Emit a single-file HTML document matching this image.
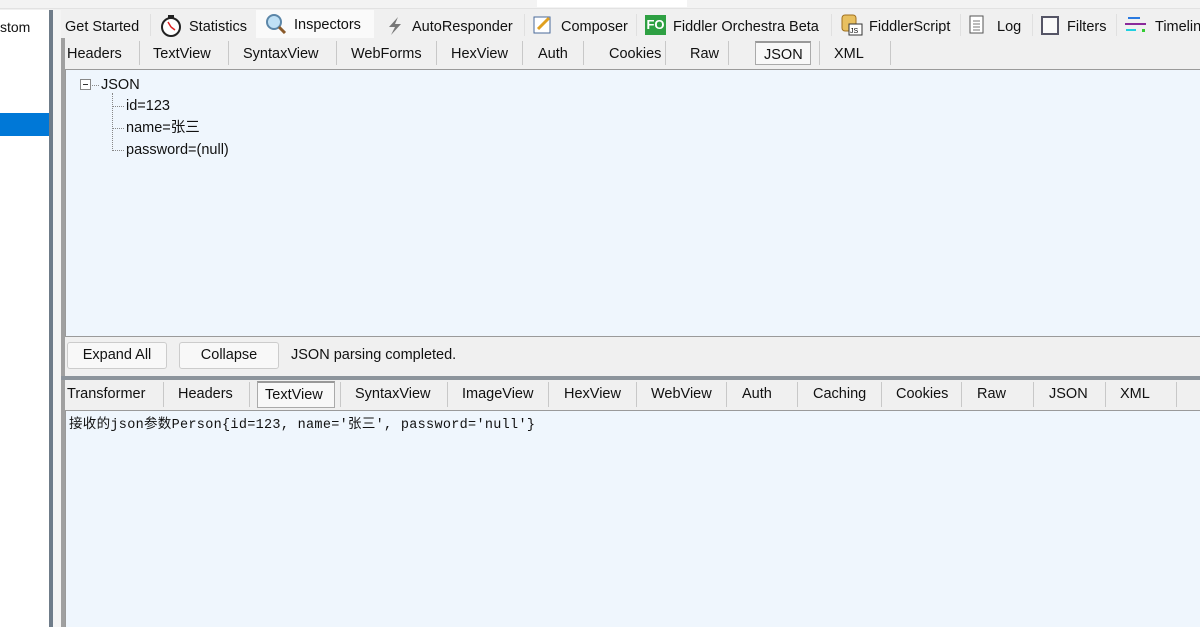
<!DOCTYPE html>
<html><head><meta charset="utf-8"><style>
*{margin:0;padding:0;box-sizing:border-box}
body{width:1200px;height:627px;overflow:hidden;background:#f0f0f0;position:relative;font-family:"Liberation Sans","Noto Sans CJK SC",sans-serif;font-size:14.5px;color:#111}
.a{position:absolute;white-space:nowrap;line-height:18px}
.sep{position:absolute;width:1px;background:#c8c8c8}
</style></head><body>
<div class="a" style="left:0;top:0;width:1200px;height:9px;background:#f3f3f3;border-bottom:1px solid #e2e2e2"></div>
<div class="a" style="left:537px;top:0;width:150px;height:7px;background:#fff"></div>
<!-- left panel -->
<div class="a" style="left:0;top:10px;width:49px;height:617px;background:#fff"></div>
<div class="a" style="left:0;top:18px;font-size:14px">stom</div>
<div class="a" style="left:0;top:113px;width:49px;height:23px;background:#0078d7"></div>
<div class="a" style="left:49px;top:10px;width:4px;height:617px;background:#6f7c89"></div>
<div class="a" style="left:53px;top:10px;width:8px;height:617px;background:#f4f4f4"></div>
<div class="a" style="left:61px;top:10px;width:4px;height:617px;background:#a0a0a0"></div>
<!-- top tabs -->
<div class="a" style="left:61px;top:10px;width:1139px;height:28px;background:#f0f0f0"></div>
<div class="a" style="left:256px;top:10px;width:118px;height:30px;background:#fafafa"></div>
<div class="a" style="left:65px;top:18px">Get Started</div>
<div class="sep" style="left:150px;top:14px;height:22px;background:#e0e0e0"></div>
<svg class="a" style="left:160px;top:14px" width="22" height="24"><circle cx="11" cy="13" r="9" fill="#fff" stroke="#222" stroke-width="2"/><path d="M11 13L8 8M11 13l4 3" stroke="#d22" stroke-width="1.5"/><rect x="8" y="1" width="6" height="3" fill="#222"/></svg>
<div class="a" style="left:189px;top:18px">Statistics</div>
<svg class="a" style="left:264px;top:12px" width="24" height="22"><circle cx="10" cy="10" r="7" fill="#bfe0f5" stroke="#5b86a8" stroke-width="2"/><path d="M15 15l6 6" stroke="#8a5a2a" stroke-width="3"/></svg>
<div class="a" style="left:294px;top:16px">Inspectors</div>
<svg class="a" style="left:386px;top:16px" width="18" height="20"><path d="M12 1L3 11h6l-4 8 10-11H9z" fill="#777"/></svg>
<div class="a" style="left:412px;top:18px">AutoResponder</div>
<div class="sep" style="left:524px;top:14px;height:22px;background:#e0e0e0"></div>
<svg class="a" style="left:533px;top:15px" width="20" height="20"><rect x="1" y="2" width="16" height="16" fill="#fff" stroke="#4a6a9a"/><path d="M5 14L16 3" stroke="#e0a020" stroke-width="3"/></svg>
<div class="a" style="left:561px;top:18px">Composer</div>
<div class="sep" style="left:636px;top:14px;height:22px;background:#e0e0e0"></div>
<div class="a" style="left:645px;top:15px;width:21px;height:20px;background:#2ea043;color:#fff;font-size:13px;font-weight:bold;text-align:center;line-height:20px">FO</div>
<div class="a" style="left:673px;top:18px">Fiddler Orchestra Beta</div>
<div class="sep" style="left:831px;top:14px;height:22px;background:#e0e0e0"></div>
<svg class="a" style="left:840px;top:13px" width="24" height="24"><rect x="2" y="2" width="14" height="16" rx="3" fill="#e8c060" stroke="#a07020"/><rect x="9" y="11" width="13" height="11" fill="#fff" stroke="#333"/><text x="10" y="20" font-size="7" font-family="Liberation Sans">JS</text></svg>
<div class="a" style="left:869px;top:18px">FiddlerScript</div>
<div class="sep" style="left:960px;top:14px;height:22px;background:#e0e0e0"></div>
<svg class="a" style="left:969px;top:15px" width="16" height="20"><rect x="1" y="1" width="13" height="17" fill="#fff" stroke="#555"/><path d="M4 6h7M4 9h7M4 12h7M4 15h7" stroke="#777"/></svg>
<div class="a" style="left:997px;top:18px">Log</div>
<div class="sep" style="left:1032px;top:14px;height:22px;background:#e0e0e0"></div>
<div class="a" style="left:1041px;top:16px;width:18px;height:19px;border:2px solid #556;background:#fafafa"></div>
<div class="a" style="left:1067px;top:18px">Filters</div>
<div class="sep" style="left:1116px;top:14px;height:22px;background:#e0e0e0"></div>
<svg class="a" style="left:1124px;top:16px" width="24" height="18"><path d="M4 2h12" stroke="#2a7ae0" stroke-width="2"/><path d="M1 8h21" stroke="#8a2a9a" stroke-width="2"/><path d="M2 14h10" stroke="#20d0e0" stroke-width="2"/><rect x="18" y="13" width="3" height="3" fill="#3c3"/></svg>
<div class="a" style="left:1155px;top:18px">Timeline</div>
<!-- sub tabs -->
<div class="a" style="left:65px;top:38px;width:1135px;height:30px;background:#f0f0f0"></div>
<div class="a" style="left:67px;top:45px">Headers</div>
<div class="sep" style="left:139px;top:41px;height:24px"></div>
<div class="a" style="left:153px;top:45px">TextView</div>
<div class="sep" style="left:228px;top:41px;height:24px"></div>
<div class="a" style="left:243px;top:45px">SyntaxView</div>
<div class="sep" style="left:336px;top:41px;height:24px"></div>
<div class="a" style="left:351px;top:45px">WebForms</div>
<div class="sep" style="left:436px;top:41px;height:24px"></div>
<div class="a" style="left:451px;top:45px">HexView</div>
<div class="sep" style="left:522px;top:41px;height:24px"></div>
<div class="a" style="left:538px;top:45px">Auth</div>
<div class="sep" style="left:583px;top:41px;height:24px"></div>
<div class="a" style="left:609px;top:45px">Cookies</div>
<div class="sep" style="left:665px;top:41px;height:24px"></div>
<div class="a" style="left:690px;top:45px">Raw</div>
<div class="sep" style="left:728px;top:41px;height:24px"></div>
<div class="a" style="left:755px;top:41px;width:56px;height:24px;border:1px solid #aaa;border-top:2px solid #999;background:#f8f8f8"></div>
<div class="a" style="left:764px;top:46px">JSON</div>
<div class="sep" style="left:819px;top:41px;height:24px"></div>
<div class="a" style="left:834px;top:45px">XML</div>
<div class="sep" style="left:890px;top:41px;height:24px"></div>
<!-- JSON pane -->
<div class="a" style="left:65px;top:69px;width:1135px;height:268px;background:#eff6fd;border:1px solid #9a9a9a;border-right:none"></div>
<div class="a" style="left:80px;top:79px;width:11px;height:11px;border:1px solid #888;background:#fff"></div>
<div class="a" style="left:83px;top:84px;width:5px;height:1px;background:#333"></div>
<div class="a" style="left:92px;top:85px;width:7px;border-top:1px dotted #888"></div>
<div class="a" style="left:101px;top:76px">JSON</div>
<div class="a" style="left:112px;top:93px;height:58px;border-left:1px dotted #888"></div>
<div class="a" style="left:113px;top:106px;width:11px;border-top:1px dotted #888"></div>
<div class="a" style="left:113px;top:128px;width:11px;border-top:1px dotted #888"></div>
<div class="a" style="left:113px;top:150px;width:11px;border-top:1px dotted #888"></div>
<div class="a" style="left:126px;top:97px">id=123</div>
<div class="a" style="left:126px;top:119px">name=张三</div>
<div class="a" style="left:126px;top:141px">password=(null)</div>
<!-- buttons -->
<div class="a" style="left:67px;top:342px;width:100px;height:27px;border:1px solid #ccc;border-radius:3px;background:#f8f8f8;text-align:center;line-height:25px">Expand All</div>
<div class="a" style="left:179px;top:342px;width:100px;height:27px;border:1px solid #ccc;border-radius:3px;background:#f8f8f8;text-align:center;line-height:25px">Collapse</div>
<div class="a" style="left:291px;top:346px">JSON parsing completed.</div>
<!-- splitter -->
<div class="a" style="left:61px;top:376px;width:1139px;height:4px;background:#8c949c"></div>
<!-- lower tabs -->
<div class="a" style="left:67px;top:385px">Transformer</div>
<div class="sep" style="left:163px;top:382px;height:25px"></div>
<div class="a" style="left:178px;top:385px">Headers</div>
<div class="sep" style="left:249px;top:382px;height:25px"></div>
<div class="a" style="left:257px;top:381px;width:78px;height:27px;border:1px solid #aaa;border-top:2px solid #999;background:#f8f8f8"></div>
<div class="a" style="left:265px;top:386px">TextView</div>
<div class="sep" style="left:340px;top:382px;height:25px"></div>
<div class="a" style="left:355px;top:385px">SyntaxView</div>
<div class="sep" style="left:447px;top:382px;height:25px"></div>
<div class="a" style="left:462px;top:385px">ImageView</div>
<div class="sep" style="left:548px;top:382px;height:25px"></div>
<div class="a" style="left:564px;top:385px">HexView</div>
<div class="sep" style="left:636px;top:382px;height:25px"></div>
<div class="a" style="left:651px;top:385px">WebView</div>
<div class="sep" style="left:726px;top:382px;height:25px"></div>
<div class="a" style="left:742px;top:385px">Auth</div>
<div class="sep" style="left:797px;top:382px;height:25px"></div>
<div class="a" style="left:813px;top:385px">Caching</div>
<div class="sep" style="left:881px;top:382px;height:25px"></div>
<div class="a" style="left:896px;top:385px">Cookies</div>
<div class="sep" style="left:961px;top:382px;height:25px"></div>
<div class="a" style="left:977px;top:385px">Raw</div>
<div class="sep" style="left:1033px;top:382px;height:25px"></div>
<div class="a" style="left:1049px;top:385px">JSON</div>
<div class="sep" style="left:1105px;top:382px;height:25px"></div>
<div class="a" style="left:1120px;top:385px">XML</div>
<div class="sep" style="left:1176px;top:382px;height:25px"></div>
<!-- text area -->
<div class="a" style="left:65px;top:410px;width:1135px;height:217px;background:#eff6fd;border:1px solid #9a9a9a;border-right:none;border-bottom:none"></div>
<div class="a" style="left:69px;top:417px;font-family:'Liberation Mono','Noto Sans CJK SC',monospace;font-size:13.5px;letter-spacing:0.3px">接收的json参数Person{id=123, name='张三', password='null'}</div>
</body></html>
